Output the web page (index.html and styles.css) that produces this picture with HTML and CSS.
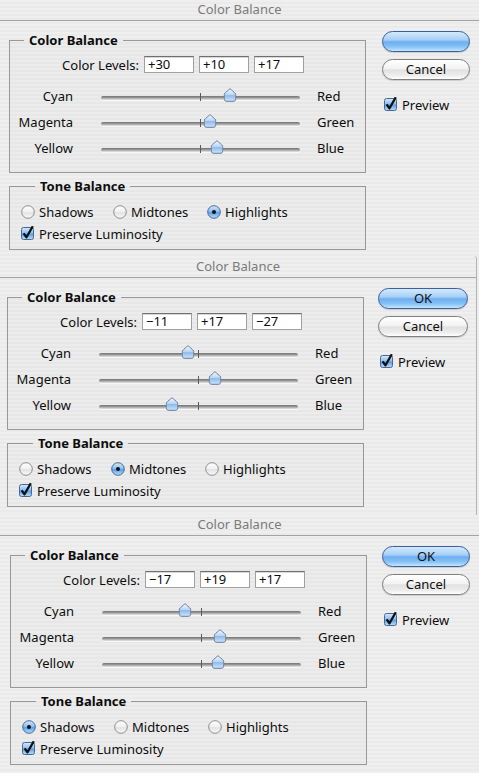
FILE: index.html
```html
<!DOCTYPE html>
<html lang="en">
<head>
<meta charset="utf-8">
<title>Color Balance</title>
<link rel="stylesheet" href="styles.css">
</head>
<body>
<svg class="defs" width="0" height="0" aria-hidden="true">
  <defs>
    <linearGradient id="g-thumb" x1="0" y1="0" x2="0" y2="1">
      <stop offset="0" stop-color="#f4f9ff"/>
      <stop offset="0.45" stop-color="#bcd8f5"/>
      <stop offset="0.55" stop-color="#8fbbea"/>
      <stop offset="1" stop-color="#cfe6fb"/>
    </linearGradient>
    <linearGradient id="g-blue" x1="0" y1="0" x2="0" y2="1">
      <stop offset="0" stop-color="#d6eafd"/>
      <stop offset="0.45" stop-color="#8fc0f1"/>
      <stop offset="0.55" stop-color="#5d9fe6"/>
      <stop offset="1" stop-color="#b9e0fb"/>
    </linearGradient>
    <linearGradient id="g-white" x1="0" y1="0" x2="0" y2="1">
      <stop offset="0" stop-color="#ffffff"/>
      <stop offset="0.5" stop-color="#f0f0f0"/>
      <stop offset="0.55" stop-color="#e2e2e2"/>
      <stop offset="1" stop-color="#fbfbfb"/>
    </linearGradient>
    <symbol id="thumb" viewBox="0 0 13 14">
      <path d="M6.5 0.7 C7.6 1.6 11 4.4 12.3 6 L12.3 11 C12.3 12.6 11.1 13.3 9.6 13.3 L3.4 13.3 C1.9 13.3 0.7 12.6 0.7 11 L0.7 6 C2 4.4 5.4 1.6 6.5 0.7 Z" fill="url(#g-thumb)" stroke="#6b7e9c" stroke-width="1"/>
    </symbol>
    <symbol id="checkbox" viewBox="0 0 14 15">
      <rect x="0.5" y="2.5" width="12" height="12" rx="2" fill="url(#g-blue)" stroke="#4c6892"/>
      <path d="M2.6 8.4 L5.5 12.3 L11.8 1.2" fill="none" stroke="#111" stroke-width="2.3" stroke-linejoin="round"/>
    </symbol>
    <symbol id="radio-off" viewBox="0 0 14 14">
      <circle cx="7" cy="7" r="6.3" fill="url(#g-white)" stroke="#8d8d8d"/>
    </symbol>
    <symbol id="radio-on" viewBox="0 0 14 14">
      <circle cx="7" cy="7" r="6.3" fill="url(#g-blue)" stroke="#4c6892"/>
      <circle cx="7" cy="7" r="2" fill="#111"/>
    </symbol>
  </defs>
</svg>

<!-- Highlights pass -->
<section class="dialog d1">
  <header class="titlebar">Color Balance</header>
  <div class="content">
    <div class="panels">
      <fieldset class="group balance">
        <legend>Color Balance</legend>
        <div class="levels">
          <span class="levels-label">Color Levels:</span>
          <span class="field">+30</span>
          <span class="field">+10</span>
          <span class="field">+17</span>
        </div>
        <div class="slider-row">
          <span class="from">Cyan</span>
          <span class="track"><span class="tick"></span><svg class="thumb" style="left:calc(50% + 15%)"><use href="#thumb"/></svg></span>
          <span class="to">Red</span>
        </div>
        <div class="slider-row">
          <span class="from">Magenta</span>
          <span class="track"><span class="tick"></span><svg class="thumb" style="left:calc(50% + 5%)"><use href="#thumb"/></svg></span>
          <span class="to">Green</span>
        </div>
        <div class="slider-row">
          <span class="from">Yellow</span>
          <span class="track"><span class="tick"></span><svg class="thumb" style="left:calc(50% + 8.5%)"><use href="#thumb"/></svg></span>
          <span class="to">Blue</span>
        </div>
      </fieldset>
      <fieldset class="group tone">
        <legend>Tone Balance</legend>
        <div class="radios">
          <span class="radio"><svg class="mark"><use href="#radio-off"/></svg>Shadows</span>
          <span class="radio"><svg class="mark"><use href="#radio-off"/></svg>Midtones</span>
          <span class="radio"><svg class="mark"><use href="#radio-on"/></svg>Highlights</span>
        </div>
        <span class="check"><svg class="box"><use href="#checkbox"/></svg>Preserve Luminosity</span>
      </fieldset>
    </div>
    <div class="actions">
      <span class="btn default"></span>
      <span class="btn">Cancel</span>
      <span class="check preview"><svg class="box"><use href="#checkbox"/></svg>Preview</span>
    </div>
  </div>
</section>

<!-- Midtones pass -->
<section class="dialog d2">
  <header class="titlebar">Color Balance</header>
  <div class="content">
    <div class="panels">
      <fieldset class="group balance">
        <legend>Color Balance</legend>
        <div class="levels">
          <span class="levels-label">Color Levels:</span>
          <span class="field">&minus;11</span>
          <span class="field">+17</span>
          <span class="field">&minus;27</span>
        </div>
        <div class="slider-row">
          <span class="from">Cyan</span>
          <span class="track"><span class="tick"></span><svg class="thumb" style="left:calc(50% - 5.5%)"><use href="#thumb"/></svg></span>
          <span class="to">Red</span>
        </div>
        <div class="slider-row">
          <span class="from">Magenta</span>
          <span class="track"><span class="tick"></span><svg class="thumb" style="left:calc(50% + 8.5%)"><use href="#thumb"/></svg></span>
          <span class="to">Green</span>
        </div>
        <div class="slider-row">
          <span class="from">Yellow</span>
          <span class="track"><span class="tick"></span><svg class="thumb" style="left:calc(50% - 13.5%)"><use href="#thumb"/></svg></span>
          <span class="to">Blue</span>
        </div>
      </fieldset>
      <fieldset class="group tone">
        <legend>Tone Balance</legend>
        <div class="radios">
          <span class="radio"><svg class="mark"><use href="#radio-off"/></svg>Shadows</span>
          <span class="radio"><svg class="mark"><use href="#radio-on"/></svg>Midtones</span>
          <span class="radio"><svg class="mark"><use href="#radio-off"/></svg>Highlights</span>
        </div>
        <span class="check"><svg class="box"><use href="#checkbox"/></svg>Preserve Luminosity</span>
      </fieldset>
    </div>
    <div class="actions">
      <span class="btn default">OK</span>
      <span class="btn">Cancel</span>
      <span class="check preview"><svg class="box"><use href="#checkbox"/></svg>Preview</span>
    </div>
  </div>
</section>

<!-- Shadows pass -->
<section class="dialog d3">
  <header class="titlebar">Color Balance</header>
  <div class="content">
    <div class="panels">
      <fieldset class="group balance">
        <legend>Color Balance</legend>
        <div class="levels">
          <span class="levels-label">Color Levels:</span>
          <span class="field">&minus;17</span>
          <span class="field">+19</span>
          <span class="field">+17</span>
        </div>
        <div class="slider-row">
          <span class="from">Cyan</span>
          <span class="track"><span class="tick"></span><svg class="thumb" style="left:calc(50% - 8.5%)"><use href="#thumb"/></svg></span>
          <span class="to">Red</span>
        </div>
        <div class="slider-row">
          <span class="from">Magenta</span>
          <span class="track"><span class="tick"></span><svg class="thumb" style="left:calc(50% + 9.5%)"><use href="#thumb"/></svg></span>
          <span class="to">Green</span>
        </div>
        <div class="slider-row">
          <span class="from">Yellow</span>
          <span class="track"><span class="tick"></span><svg class="thumb" style="left:calc(50% + 8.5%)"><use href="#thumb"/></svg></span>
          <span class="to">Blue</span>
        </div>
      </fieldset>
      <fieldset class="group tone">
        <legend>Tone Balance</legend>
        <div class="radios">
          <span class="radio"><svg class="mark"><use href="#radio-on"/></svg>Shadows</span>
          <span class="radio"><svg class="mark"><use href="#radio-off"/></svg>Midtones</span>
          <span class="radio"><svg class="mark"><use href="#radio-off"/></svg>Highlights</span>
        </div>
        <span class="check"><svg class="box"><use href="#checkbox"/></svg>Preserve Luminosity</span>
      </fieldset>
    </div>
    <div class="actions">
      <span class="btn default">OK</span>
      <span class="btn">Cancel</span>
      <span class="check preview"><svg class="box"><use href="#checkbox"/></svg>Preview</span>
    </div>
  </div>
</section>
</body>
</html>
```

FILE: styles.css
```css
html, body {
  margin: 0;
  padding: 0;
}

body {
  width: 479px;
  height: 773px;
  overflow: hidden;
  font-family: "Noto Sans", "DejaVu Sans", sans-serif;
  font-size: 13px;
  color: #0d0d0d;
  background: #ededed;
}

.defs {
  position: absolute;
  width: 0;
  height: 0;
}

/* Aqua sheet with faint pinstripes */
.dialog {
  box-sizing: border-box;
  background: repeating-linear-gradient(180deg, #efefef 0 2px, #eaeaea 2px 4px);
}

.d1 { height: 256px; }
.d2 {
  height: 259px;
  width: 477px;
  border-right: 1px solid #b4b4b4;
  border-top-right-radius: 3px;
}
.d3 { height: 258px; }

.titlebar {
  height: 20px;
  line-height: 19px;
  text-align: center;
  color: #7b7b7b;
  border-bottom: 1px solid #a3a3a3;
}

.d2 .titlebar { height: 21px; line-height: 20px; }

.content {
  display: flex;
  align-items: flex-start;
  padding: 10px 0 0 9px;
}

.d2 .content { padding-left: 7px; }
.d3 .content { padding-left: 10px; }

.panels {
  width: 357px;
  padding-top: 1px;
}

/* Group boxes */
.group {
  box-sizing: border-box;
  width: 357px;
  margin: 0;
  min-width: 0;
  border: 1px solid #989898;
  background: rgba(0, 0, 0, 0.012);
}

.group legend {
  margin-left: 14px;
  padding: 0 5px;
  font-weight: bold;
  line-height: 16px;
  color: #0d0d0d;
}

.balance {
  padding: 8px 0 11px 0;
}

.tone {
  margin-top: 5px;
  padding: 9px 0 6px 11px;
}

/* Color levels */
.levels {
  display: flex;
  align-items: center;
  height: 17px;
  margin-bottom: 10px;
}

.levels-label {
  width: 129px;
  margin-right: 5px;
  text-align: right;
}

.field {
  box-sizing: border-box;
  width: 50px;
  height: 17px;
  margin-right: 5px;
  padding-left: 3px;
  line-height: 15px;
  background: #fff;
  border: 1px solid #a0a0a0;
  border-top-color: #6f6f6f;
  box-shadow: inset 0 1px 0 #d8d8d8;
}

/* Sliders */
.slider-row {
  display: flex;
  align-items: center;
  height: 26px;
}

.from {
  width: 63px;
  text-align: right;
}

.track {
  position: relative;
  box-sizing: border-box;
  width: 199px;
  height: 4px;
  margin: 4px 0 0 28px;
  border-radius: 2px;
  background: linear-gradient(180deg, #737373 0%, #9a9a9a 45%, #c6c6c6 75%, #e6e6e6 100%);
  box-shadow: 0 1px 0 rgba(255, 255, 255, 0.7);
}

.tick {
  position: absolute;
  left: 99px;
  top: -3px;
  width: 1px;
  height: 8px;
  background: #5a5a5a;
}

.thumb {
  position: absolute;
  top: -8px;
  width: 13px;
  height: 14px;
  transform: translateX(-50%);
}

.to {
  margin-left: 17px;
}

/* Radios and checkboxes */
.radios {
  display: grid;
  grid-template-columns: 92px 94px auto;
  height: 18px;
  align-items: center;
}

.radio,
.check {
  display: flex;
  align-items: center;
}

.mark {
  width: 14px;
  height: 14px;
  margin-right: 4px;
}

.check {
  height: 18px;
  margin-top: 4px;
}

.box {
  width: 14px;
  height: 15px;
  margin: -3px 4px 0 0;
}

/* Buttons column */
.actions {
  display: flex;
  flex-direction: column;
  width: 88px;
  margin-left: 16px;
}

.d2 .actions { margin-left: 14px; width: 90px; }
.d3 .actions { margin-left: 15px; }

.btn {
  box-sizing: border-box;
  height: 21px;
  margin-bottom: 7px;
  border-radius: 11px;
  border: 1px solid #7f7f7f;
  text-align: center;
  line-height: 19px;
  color: #111;
  background: linear-gradient(180deg, #ffffff 0%, #f3f3f3 45%, #e1e1e1 52%, #ececec 80%, #ffffff 100%);
  box-shadow: 0 1px 1px rgba(0, 0, 0, 0.15);
}

.btn.default {
  border-color: #3d5f9c;
  background: linear-gradient(180deg, #d4e9fd 0%, #a6cff6 42%, #6eaef0 52%, #86c2f6 78%, #c3e6fd 100%);
}

.preview {
  margin-top: 9px;
  padding-left: 2px;
}
```
